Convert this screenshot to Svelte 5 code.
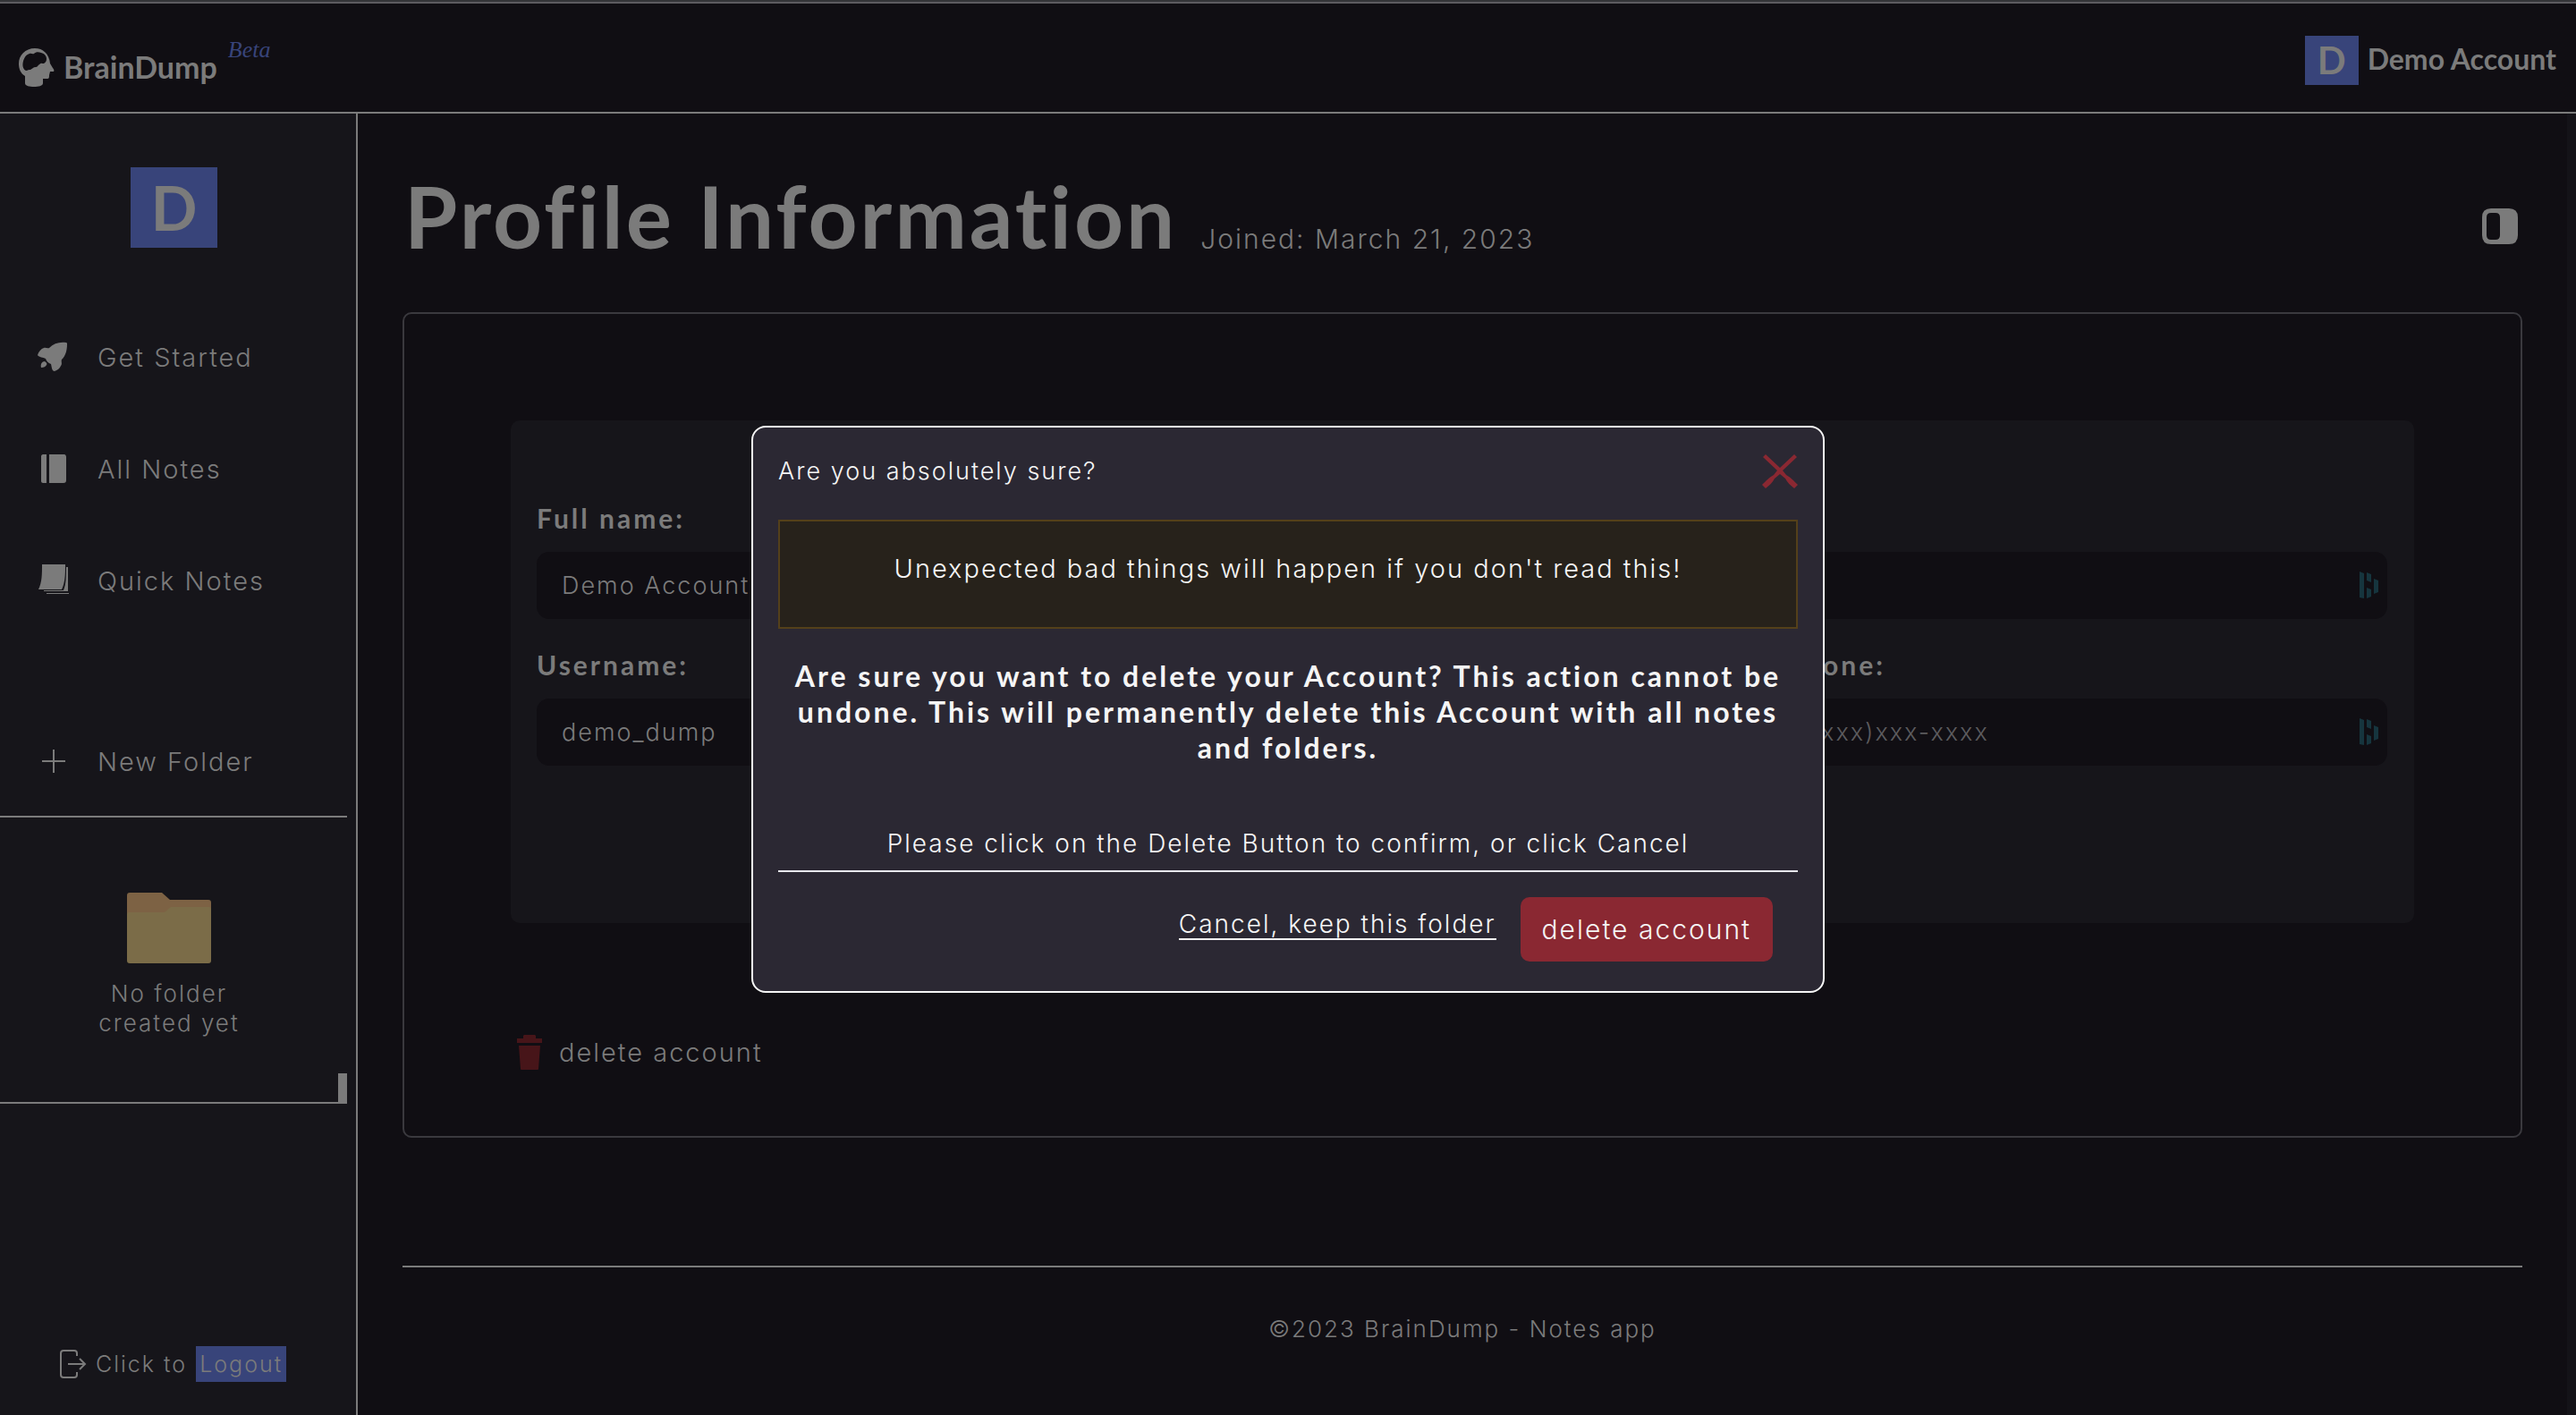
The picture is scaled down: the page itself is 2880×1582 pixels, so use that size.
<script>
  const nav = [
    { label: 'Get Started', icon: 'rocket' },
    { label: 'All Notes', icon: 'book' },
    { label: 'Quick Notes', icon: 'stack' }
  ];
  let fullName = $state('Demo Account');
  let username = $state('demo_dump');
  let email = $state('');
  let phone = $state('');
</script>

{#snippet fieldMark()}
  <svg class="mark" viewBox="0 0 22 30" aria-hidden="true">
    <path d="M0 0l5 2v28l-5-1zM8 1l5 2v9l-5-2zM8 18l5 2v8l-5 2zM16 8l5 2v13l-5 2z" />
  </svg>
{/snippet}

<div class="page">
  <header class="topbar">
    <a class="brand" href="#home">
      <svg class="logo" viewBox="0 0 40 44" aria-hidden="true">
        <path fill-rule="evenodd" d="M18 0C7 0 0 8 0 17c0 6 2 11 7 14v8c0 3 5 4 10 4s10-1 10-4v-5h5c2 0 2-2 2-4l1-4h4c1-1 0-3-1-4l-3-5C34 6 27 0 18 0zM4.500 20C4 14 7 7 12 6c2-1 3 1 5 0 2-2 5-2 8-1 4 1 6 4 6 7 0 2-1 4-3 5-2 0-3-1-5 1-2 1-2 3-4 3-3 0-4 2-6 3-2 0-3 0-4 1-2 0-4-2-4.500-5z" />
      </svg>
      <span class="name">BrainDump</span>
      <span class="beta">Beta</span>
    </a>
    <a class="account" href="#profile"><span class="avatar">D</span><span>Demo Account</span></a>
  </header>

  <div class="body">
    <aside class="sidebar">
      <div class="avatar large">D</div>
      <nav>
        {#each nav as item}
          <a class="item" href="#{item.icon}">
            <svg class="icon" viewBox="0 0 38 38" aria-hidden="true">
              {#if item.icon === 'rocket'}
                <path d="M35 3c1 0 1 1 1 2 0 7-2 13-6 17-1 2 1 5-1 7-1 3-4 5-7 6-3 0-3-4-4-8-3-1-5-3-6-6-3-2-7-1-9-4 1-4 4-7 7-8 2-1 4 1 6 0 5-5 11-7 19-6z" />
                <path d="M7 31c-1-4 1-7 4-7 2 1 3 3 2 4-1 2-3 3-6 3z" />
              {:else if item.icon === 'book'}
                <path d="M9 3h4v32H9c-1 0-2-1-2-2V5c0-1 1-2 2-2zM16 3h16c2 0 3 1 3 3v26c0 2-1 3-3 3H16z" />
              {:else}
                <path d="M8 1h26c0 10 0 20-4 28H4C8 21 8 12 8 1z" />
                <path d="M35 4h2v27H10v-1h22c3-7 3-16 3-26zM38 6h1v28H13v-1h25z" />
              {/if}
            </svg>
            {item.label}
          </a>
        {/each}
      </nav>
      <button class="item new" type="button">
        <svg class="icon" viewBox="0 0 38 38" aria-hidden="true">
          <path d="M20 6h2v12h12v2H22v12h-2V20H8v-2h12z" />
        </svg>
        New Folder
      </button>
      <div class="folders">
        <svg class="folder" viewBox="0 0 94 80" aria-hidden="true">
          <path fill="#7d6244" d="M3 0h36l9 8h43q3 0 3 3v30H0V3q0-3 3-3z" />
          <path fill="#7b6c48" d="M2 22h40l7-6h43q2 0 2 2v58q0 3-3 3H3q-3 0-3-3V24q0-2 2-2z" />
        </svg>
        <p>No folder<br />created yet</p>
      </div>
      <div class="logout">
        <svg class="exit" viewBox="0 0 30 32" aria-hidden="true">
          <path d="M19 7V4q0-3-3-3H4Q1 1 1 4v24q0 3 3 3h12q3 0 3-3v-3M9 16h19M22 10l6 6-6 6" />
        </svg>
        <span>Click to</span>
        <button type="button">Logout</button>
      </div>
    </aside>

    <main>
      <div class="heading">
        <h1>Profile Information</h1>
        <span class="joined">Joined: March 21, 2023</span>
        <button class="toggle" type="button" aria-label="Toggle panel">
          <svg viewBox="0 0 40 40" aria-hidden="true">
            <path fill-rule="evenodd" d="M10 0h20q10 0 10 10v20q0 10-10 10H10Q0 40 0 30V10Q0 0 10 0zM10 5q-5 0-5 5v20q0 5 5 5h5q5 0 5-5V10q0-5-5-5z" />
          </svg>
        </button>
      </div>

      <section class="panel">
        <form class="card">
          <div class="field">
            <label for="full">Full name:</label>
            <input id="full" type="text" bind:value={fullName} />
          </div>
          <div class="field wide">
            <input type="email" aria-label="Email" bind:value={email} />
            {@render fieldMark()}
          </div>
          <div class="field">
            <label for="user">Username:</label>
            <input id="user" type="text" bind:value={username} />
          </div>
          <div class="field last">
            <label for="phone">Phone:</label>
            <input id="phone" type="tel" placeholder="(xxx)xxx-xxxx" bind:value={phone} />
            {@render fieldMark()}
          </div>
        </form>
        <button class="remove" type="button">
          <svg viewBox="0 0 28 40" aria-hidden="true">
            <path d="M0 4h7V1l1-1h12l1 1v3h7v5H0zM2 12h24l-2 26q0 1-1 1H5q-1 0-1-1z" />
          </svg>
          delete account
        </button>
      </section>

      <footer>©2023 BrainDump - Notes app</footer>
    </main>
    <div class="gutter"></div>
  </div>
</div>

<div class="overlay">
  <dialog open aria-labelledby="ask">
    <div class="top">
      <h2 id="ask">Are you absolutely sure?</h2>
      <button class="close" type="button" aria-label="Close">
        <svg viewBox="0 0 40 38" aria-hidden="true">
          <path d="M4 0l16 15L36 0l3 3-16 15 4 5c4 2 9 7 13 11l-4 4c-4-3-8-7-10-11l-6-5-6 5c-2 4-6 8-10 11l-4-4c4-4 9-9 13-11l4-5L1 3z" />
        </svg>
      </button>
    </div>
    <p class="warning">Unexpected bad things will happen if you don't read this!</p>
    <p class="question">Are sure you want to delete your Account? This action cannot be undone. This will permanently delete this Account with all notes and folders.</p>
    <p class="hint">Please click on the Delete Button to confirm, or click Cancel</p>
    <div class="actions">
      <a class="cancel" href="#cancel">Cancel, keep this folder</a>
      <button class="confirm" type="button">delete account</button>
    </div>
  </dialog>
</div>

<style>
  :global(body) {
    background: #100e13;
  }
  .page,
  .overlay {
    --bold: Lato, 'Open Sans', sans-serif;
    --dim: #7b7b7b;
    font-family: Inter, 'Liberation Sans', sans-serif;
    font-weight: 300;
    font-size: 28px;
    letter-spacing: 2px;
    box-sizing: border-box;
  }
  .page {
    min-height: 100vh;
    display: flex;
    flex-direction: column;
    color: var(--dim);
    fill: var(--dim);
    border-top: 2px solid #343538;
  }
  button {
    font: inherit;
    letter-spacing: inherit;
    color: inherit;
    background: none;
    border: 0;
    padding: 0;
    cursor: pointer;
  }
  a {
    color: inherit;
    text-decoration: none;
  }
  p,
  h1,
  h2 {
    margin: 0;
  }
  svg {
    display: block;
    flex: none;
  }

  .topbar {
    display: flex;
    justify-content: space-between;
    align-items: flex-start;
    height: 121px;
    padding: 0 22px 0 21px;
    border-top: 2px solid #5d5b60;
    border-bottom: 2px solid #7b7b7b;
    font-family: var(--bold);
    font-weight: 700;
    letter-spacing: 0;
  }
  .brand {
    display: flex;
    padding-top: 50px;
  }
  .logo {
    width: 40px;
    height: 44px;
  }
  .name {
    font-size: 34px;
    line-height: 42px;
    margin-left: 10px;
  }
  .beta {
    margin: -16px 0 0 12px;
    font: italic 400 26px/36px 'Liberation Serif', serif;
    color: #38447a;
  }
  .account {
    display: flex;
    gap: 10px;
    padding-top: 36px;
    font-size: 32px;
    line-height: 52px;
  }
  .avatar {
    display: grid;
    place-items: center;
    width: 60px;
    height: 55px;
    background: #38447a;
    font: 700 42px/55px var(--bold);
    letter-spacing: 0;
  }

  .body {
    flex: 1;
    display: flex;
  }
  .sidebar {
    flex: none;
    width: 398px;
    display: flex;
    flex-direction: column;
    background: #16151a;
    border-right: 2px solid #7b7b7b;
  }
  .avatar.large {
    width: 97px;
    height: 90px;
    margin: 60px 0 92px 146px;
    font-size: 68px;
    line-height: 88px;
  }
  nav {
    display: flex;
    flex-direction: column;
    gap: 65px;
  }
  .item {
    display: flex;
    align-items: center;
    gap: 32px;
    height: 60px;
    padding-left: 39px;
    font-size: 29px;
    text-align: left;
  }
  .icon {
    width: 38px;
    height: 38px;
  }
  .new {
    box-sizing: content-box;
    margin: 142px 10px 0 0;
    padding-bottom: 31px;
    border-bottom: 2px solid #7b7b7b;
  }
  .folders {
    width: 378px;
    height: 234px;
    padding-top: 84px;
    border-bottom: 2px solid #7b7b7b;
    border-right: 10px solid #7b7b7b;
    border-image: linear-gradient(#16151a 286px, #7b7b7b 286px) 0 10 2 0;
  }
  .folder {
    width: 94px;
    height: 80px;
    margin: 0 auto 16px;
  }
  .folders p {
    font-size: 26px;
    line-height: 33px;
    text-align: center;
  }
  .logout {
    display: flex;
    align-items: center;
    gap: 10px;
    margin-top: auto;
    padding: 0 0 37px 67px;
    font-size: 25px;
  }
  .logout button {
    height: 40px;
    padding: 0 4px;
    background: #38447a;
  }
  .exit {
    width: 30px;
    height: 32px;
    fill: none;
    stroke: var(--dim);
    stroke-width: 2;
  }

  main {
    flex: 1;
    padding: 66px 50px 0;
  }
  .gutter {
    width: 10px;
    background: #141318;
  }
  .heading {
    display: flex;
    align-items: baseline;
    margin-bottom: 60px;
  }
  h1 {
    font: 700 96px/96px var(--bold);
    letter-spacing: 3px;
    padding-left: 2px;
  }
  .joined {
    margin-left: 26px;
    font-size: 30px;
  }
  .toggle {
    align-self: center;
    margin: 24px 5px 0 auto;
  }
  .toggle svg {
    width: 40px;
    height: 40px;
  }
  .panel {
    padding: 119px 119px 73px;
    border: 2px solid #3a393e;
    border-radius: 10px;
  }
  .card {
    display: grid;
    grid-template-columns: repeat(3, 1fr);
    gap: 33px 26px;
    padding: 91px 30px 176px 29px;
    background: #16151a;
    border-radius: 10px;
  }
  .field {
    position: relative;
    display: flex;
    flex-direction: column;
    justify-content: flex-end;
    gap: 20px;
  }
  .wide {
    grid-column: span 2;
  }
  .last {
    grid-column: 3;
  }
  label {
    font: 700 30px/36px var(--bold);
    letter-spacing: 3px;
  }
  input {
    width: 100%;
    height: 75px;
    box-sizing: border-box;
    padding: 0 28px;
    border: 0;
    border-radius: 14px;
    background: #100e13;
    color: var(--dim);
    font: inherit;
    font-size: 27px;
    letter-spacing: inherit;
  }
  input::placeholder {
    color: #5c5b5e;
  }
  .mark {
    position: absolute;
    right: 9px;
    bottom: 23px;
    width: 22px;
    height: 30px;
    fill: #16353e;
  }
  .remove {
    display: flex;
    align-items: center;
    gap: 19px;
    margin: 125px 0 0 7px;
    font-size: 29px;
    line-height: 36px;
  }
  .remove svg {
    width: 28px;
    height: 40px;
    fill: #471519;
  }
  footer {
    margin-top: 143px;
    padding-top: 51px;
    border-top: 2px solid #7b7b7b;
    font-size: 26px;
    line-height: 36px;
    text-align: center;
  }

  .overlay {
    position: fixed;
    inset: 0;
    display: grid;
    place-items: center;
    padding-top: 3px;
    color: #f5f5f5;
  }
  dialog {
    position: static;
    width: 1200px;
    box-sizing: border-box;
    margin: 0;
    padding: 28px 28px 33px;
    border: 2px solid #f5f5f5;
    border-radius: 16px;
    background: #2b2833;
    color: inherit;
    text-align: center;
  }
  .top {
    display: flex;
    justify-content: space-between;
    align-items: center;
    height: 42px;
    margin-bottom: 33px;
  }
  h2 {
    font-size: 27px;
    font-weight: 300;
  }
  .close svg {
    width: 40px;
    height: 38px;
    fill: #8a2832;
  }
  .warning {
    padding: 35px 0 47px;
    border: 2px solid #54401a;
    background: #27221b;
    font-size: 29px;
    line-height: 36px;
  }
  .question {
    margin: 33px 0 69px;
    font: 700 32px/40px var(--bold);
    letter-spacing: 3px;
  }
  .hint {
    padding-bottom: 12px;
    border-bottom: 2px solid #e8e8ee;
    line-height: 36px;
  }
  .actions {
    display: flex;
    justify-content: flex-end;
    align-items: flex-start;
    gap: 27px;
    padding: 28px 28px 0 0;
  }
  .cancel {
    margin-top: 14px;
    line-height: 32px;
    border-bottom: 2px solid #f5f5f5;
  }
  .confirm {
    height: 72px;
    padding: 0 24px;
    border-radius: 10px;
    background: #8a2832;
    font-size: 30px;
  }
</style>
